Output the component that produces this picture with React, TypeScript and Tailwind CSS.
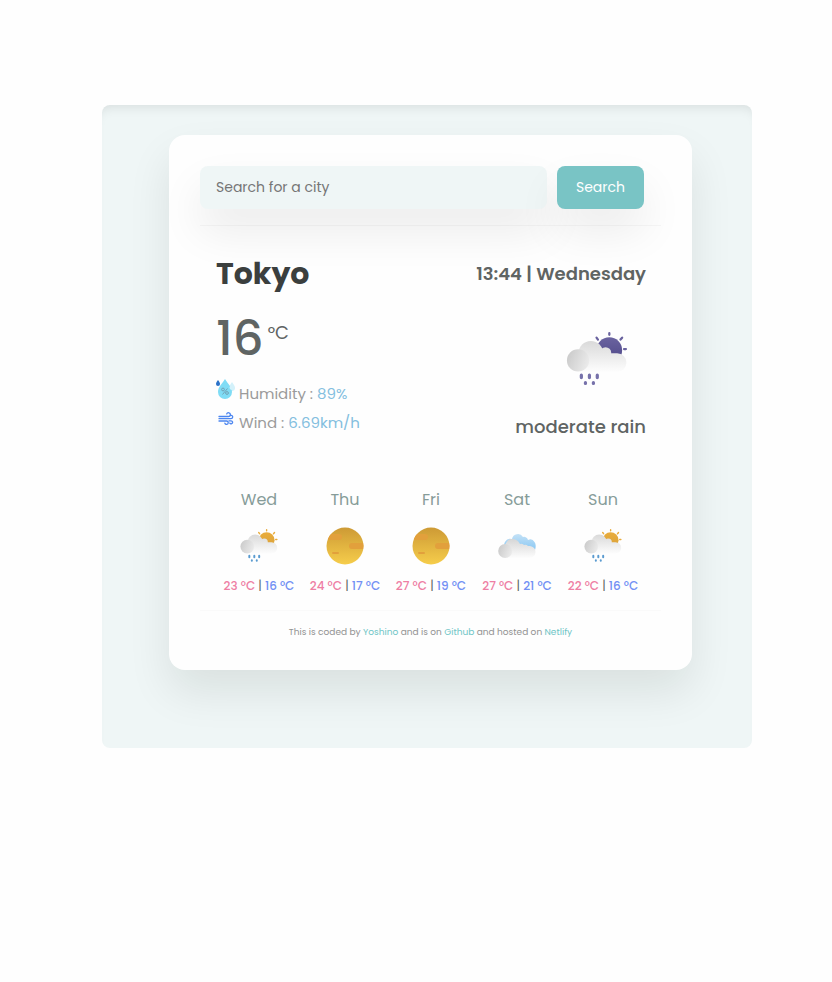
import type { ReactNode } from "react";

function Rainy({ id, sun, sunDark, drop, className }: { id: string; sun: string; sunDark: string; drop: string; className: string }) {
  return (
    <svg viewBox="0 0 64 58" className={className} aria-hidden="true">
      <defs>
        <linearGradient id={id + "s"} x1="0" y1="0" x2="0" y2="1">
          <stop offset="0" stopColor={sun} />
          <stop offset="1" stopColor={sunDark} />
        </linearGradient>
        <linearGradient id={id + "c"} gradientUnits="userSpaceOnUse" x1="0" y1="9" x2="0" y2="42">
          <stop offset="0" stopColor="#d9d9d9" />
          <stop offset="1" stopColor="#fdfdfd" />
        </linearGradient>
        <linearGradient id={id + "p"} x1="0" y1="0.3" x2="1" y2="0.7">
          <stop offset="0" stopColor="#cbcbcb" />
          <stop offset="1" stopColor="#ececec" />
        </linearGradient>
      </defs>
      <circle cx="45" cy="19" r="13.5" fill={"url(#" + id + "s)"} />
      <g stroke={sun} strokeWidth="2.4" strokeLinecap="round">
        <path d="M45 1.300v1.700M31.500 6l1.500 2M58.500 6l-1.700 2M60.500 18h2" />
      </g>
      <g fill={"url(#" + id + "c)"}>
        <circle cx="25.500" cy="22.500" r="13" />
        <circle cx="41" cy="22" r="6" />
        <rect x="12" y="22.500" width="51" height="19.500" rx="9.700" />
      </g>
      <circle cx="12" cy="30" r="11.700" fill={"url(#" + id + "p)"} />
      <g stroke={drop} strokeWidth="3.4" strokeLinecap="round">
        <path d="M15.500 45.500v2.500M24 45.500v2.500M32.300 45.500v2.500M19.800 53.500v.800M28.200 53.500v.800" />
      </g>
    </svg>
  );
}

function Sunny({ id }: { id: string }) {
  return (
    <svg viewBox="0 0 38 38" className="size-[38px]" aria-hidden="true">
      <defs>
        <linearGradient id={id} x1="0" y1="0" x2="0" y2="1">
          <stop offset="0" stopColor="#cd9a35" />
          <stop offset="1" stopColor="#f6cd4b" />
        </linearGradient>
        <clipPath id={id + "k"}>
          <circle cx="19" cy="19" r="18.500" />
        </clipPath>
      </defs>
      <circle cx="19" cy="19" r="18.500" fill={"url(#" + id + ")"} />
      <g clipPath={"url(#" + id + "k)"} fill="#e2a03c">
        <rect x="1" y="7" width="15" height="6" rx="3" />
        <rect x="23" y="16" width="18" height="6" rx="3" />
        <rect x="6" y="25" width="7" height="2" rx="1" />
      </g>
    </svg>
  );
}

function Cloudy() {
  return (
    <svg viewBox="0 0 38 26" className="h-[26px] w-[38px]" aria-hidden="true">
      <defs>
        <linearGradient id="cb" x1="0" y1="0" x2="0" y2="1">
          <stop offset="0" stopColor="#c3e1f6" />
          <stop offset="1" stopColor="#86c6f3" />
        </linearGradient>
        <linearGradient id="cc" x1="0" y1="0" x2="0" y2="1">
          <stop offset="0" stopColor="#d6d6d6" />
          <stop offset="1" stopColor="#fdfdfd" />
        </linearGradient>
        <linearGradient id="cp" x1="0" y1="0.3" x2="1" y2="0.7">
          <stop offset="0" stopColor="#cbcbcb" />
          <stop offset="1" stopColor="#ececec" />
        </linearGradient>
      </defs>
      <path d="M8 16a6 6 0 0 1 6-10 6 6 0 0 1 11-2 4 4 0 0 1 5 3 5 5 0 0 1 6.500 2c1.500 2 1.500 5 .5 8l-4 1z" fill="url(#cb)" />
      <path d="M7 25h24a6 6 0 0 0 1-12h-2a4 4 0 0 0-4-1 4 4 0 0 0-4-1c-2-4-5-5-8-5-4 0-6 3-7 7z" fill="url(#cc)" />
      <circle cx="7.200" cy="18" r="7" fill="url(#cp)" />
    </svg>
  );
}

function Humidity() {
  return (
    <svg viewBox="0 0 20 20" className="size-5" aria-hidden="true">
      <path d="M16 3c2 3 3 4 3 6a3 3 0 0 1-6 0c0-2 1-3 3-6z" fill="#d3f1fa" />
      <path d="M9 0c3 5 7 8 7 13a7 7 0 0 1-14 0c0-5 4-8 7-13z" fill="#7fdcf5" />
      <path d="M2 1c1 1.500 2 2.500 2 4a2 2 0 0 1-4 0c0-1.500 1-2.500 2-4z" fill="#2a72c8" />
      <path d="M16 4c1.500 2.500 2.500 3.500 2.500 5a2.600 2.600 0 0 1-5 0c0-1.500 1-2.500 2.500-5z" fill="#d3f1fa" />
      <g fill="none" stroke="#6f9db0" strokeWidth="0.900">
        <circle cx="7" cy="10.500" r="1.400" />
        <circle cx="11" cy="14" r="1.400" />
        <path d="M11.500 9.500l-5 6" />
      </g>
    </svg>
  );
}

function Wind() {
  return (
    <svg viewBox="0 0 16 14" className="h-[14px] w-4" fill="none" stroke="#4c86f0" strokeWidth="1.300" strokeLinecap="round" aria-hidden="true">
      <path d="M1 4.500h9.500a1.900 1.900 0 1 0-1.800-2.600M1 6.700h12a1.700 1.700 0 1 0-1.600-2.300M1 9h7.500a1.700 1.700 0 1 1-1.600 2.200M11 8.800h2a1.500 1.500 0 1 1-1.200 2.300" />
    </svg>
  );
}

const small = (id: string) => <Rainy id={id} sun="#e9ac3c" sunDark="#d9a23a" drop="#5a9bd0" className="h-[34px] w-[38px]" />;

const days: { day: string; max: number; min: number; icon: ReactNode }[] = [
  { day: "Wed", max: 23, min: 16, icon: small("wed") },
  { day: "Thu", max: 24, min: 17, icon: <Sunny id="thu" /> },
  { day: "Fri", max: 27, min: 19, icon: <Sunny id="fri" /> },
  { day: "Sat", max: 27, min: 21, icon: <Cloudy /> },
  { day: "Sun", max: 22, min: 16, icon: small("sun") },
];

export default function App() {
  return (
    <div className="min-h-screen bg-[#fefefe] pt-[105px] pr-20 pl-[102px] font-['Poppins','Inter',sans-serif] text-[#5f6463]">
      <div className="rounded-lg bg-[#eff6f6] pt-[30px] pr-[60px] pb-[78px] pl-[67px] shadow-[inset_0_10px_12px_-8px_rgba(0,0,0,0.1)]">
        <main className="rounded-[16px] bg-[#fefefe] px-[31px] pt-[31px] pb-[30px] shadow-[0_22px_44px_rgba(0,20,15,0.09)]">
          <form className="flex gap-[10px] border-b border-black/3 pr-[17px] pb-4" onSubmit={(e) => e.preventDefault()}>
            <input
              aria-label="Search for a city"
              placeholder="Search for a city"
              className="h-[43px] min-w-0 flex-1 rounded-lg bg-[#eff6f6] px-4 text-[14px] shadow-[0_22px_44px_rgba(0,10,10,0.08)] outline-none placeholder:text-[#757575]"
            />
            <button type="submit" className="h-[43px] w-[87px] rounded-lg bg-[#79c4c5] text-[14px] text-white shadow-[0_22px_44px_rgba(0,10,10,0.08)]">
              Search
            </button>
          </form>

          <section className="flex justify-between pt-[30px] pr-[15px] pl-4">
            <div>
              <h1 className="text-[30px] leading-9 font-bold text-[#3b3f3e]">Tokyo</h1>
              <p className="mt-[17px] flex items-start gap-1 leading-[60px]">
                <span className="text-[48px] font-medium">16</span>
                <span className="pt-3 text-[18px] leading-6">°C</span>
              </p>
              <ul className="mt-[10px] text-[15px] leading-[29px] text-[#9b9b9b]">
                <li className="flex gap-[3px]">
                  <Humidity />
                  <span>Humidity : <span className="text-[#84bfdf]">89%</span></span>
                </li>
                <li className="flex gap-[3px]">
                  <span className="flex w-5 justify-center pt-1"><Wind /></span>
                  <span>Wind : <span className="text-[#84bfdf]">6.69km/h</span></span>
                </li>
              </ul>
            </div>
            <div className="flex flex-col items-end">
              <p className="text-[18px] leading-9 font-semibold">13:44 | Wednesday</p>
              <Rainy id="now" sun="#6a639f" sunDark="#4e4788" drop="#7671aa" className="mt-[40px] mr-[18px] h-[55px] w-[62px]" />
              <p className="mt-[26px] text-[18px] leading-7 font-medium">moderate rain</p>
            </div>
          </section>

          <section className="mt-[47px] grid grid-cols-5 border-b border-[#fafafa] pr-[15px] pb-[14px] pl-4 text-center">
            {days.map((d) => (
              <div key={d.day}>
                <h2 className="text-[16px] leading-6 text-[#869c99]">{d.day}</h2>
                <div className="mt-[14px] flex h-[40px] items-center justify-center">{d.icon}</div>
                <p className="mt-[10px] text-[12px] leading-5 font-medium whitespace-nowrap">
                  <span className="text-[#ee7fa4]">{d.max} °C</span> <span className="font-normal">|</span> <span className="text-[#7290f4]">{d.min} °C</span>
                </p>
              </div>
            ))}
          </section>
          <footer className="pt-[13px] text-center text-[9px] leading-4 text-[#929292]">
            This is coded by <a href="#" className="text-[#6fc5c6]">Yoshino</a> and is on <a href="#" className="text-[#6fc5c6]">Github</a> and hosted on <a href="#" className="text-[#6fc5c6]">Netlify</a>
          </footer>
        </main>
      </div>
    </div>
  );
}
